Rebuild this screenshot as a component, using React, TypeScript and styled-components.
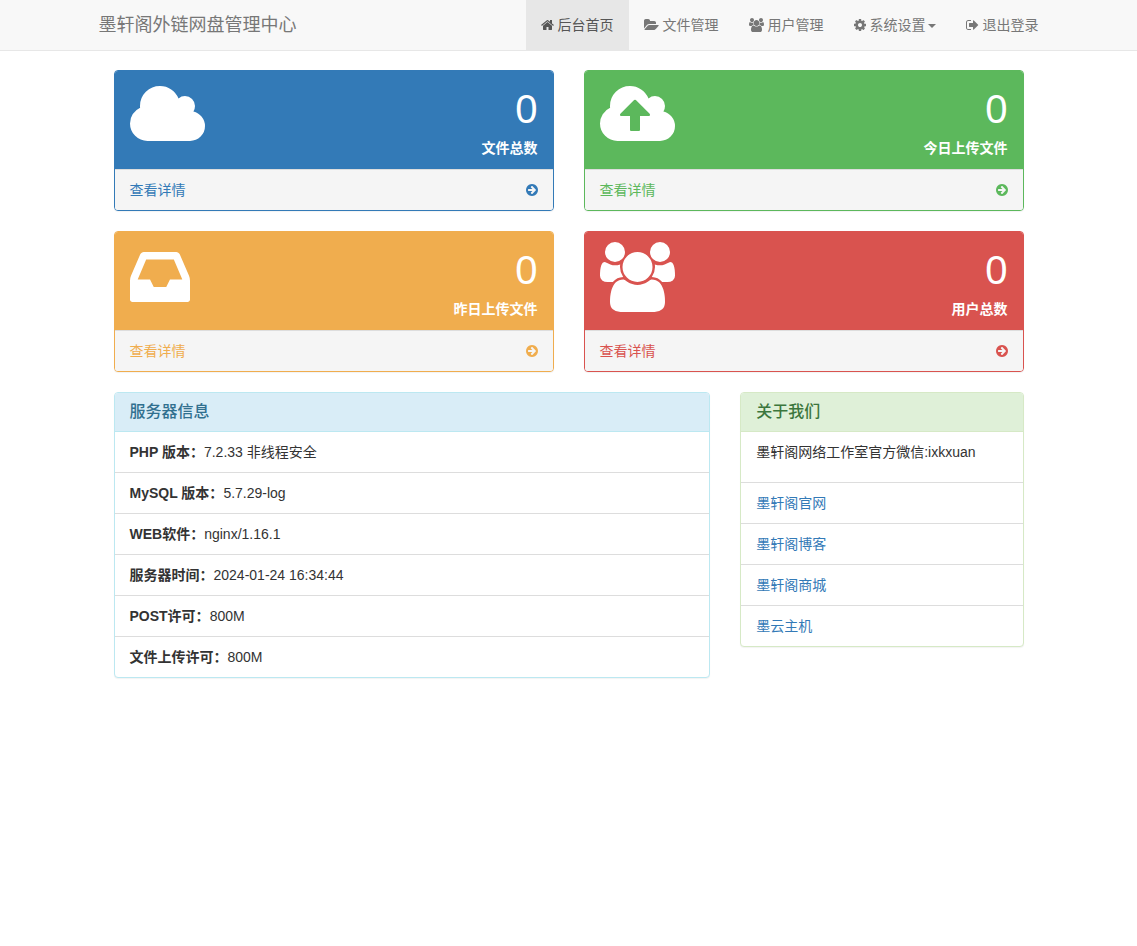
import React from 'react';
import styled, { createGlobalStyle, css } from 'styled-components';

const GlobalStyle = createGlobalStyle`
  *, *::before, *::after { box-sizing: border-box; }
  body {
    margin: 0;
    background: #fff;
    color: #333;
    font-family: "Liberation Sans", Arial, "Noto Sans CJK SC", sans-serif;
    font-size: 14px;
    line-height: 20px;
  }
  a { color: #337ab7; text-decoration: none; }
  ul, p, h3 { margin: 0; padding: 0; }
  ul { list-style: none; }
`;

/* Icons share a 1792-unit em square; x and width give each one's advance box. */
const glyphs = {
  home: {
    x: 64,
    width: 1664,
    d: 'M1472 992v480q0 26-19 45t-45 19h-384v-384h-256v384h-384q-26 0-45-19t-19-45v-480q0-1 .5-3t.5-3l575-474 575 474q1 2 1 6zm223-69l-62 74q-8 9-21 11h-3q-13 0-21-7l-692-577-692 577q-12 8-24 7-13-2-21-11l-62-74q-8-10-7-23.5t11-21.5l719-599q32-26 76-26t76 26l244 204v-195q0-14 9-23t23-9h192q14 0 23 9t9 23v408l219 182q10 8 11 21.5t-7 23.5z',
  },
  folder: {
    x: 0,
    width: 1920,
    d: 'M1879 952q0 31-31 66l-336 396q-43 51-120.5 86.5t-143.5 35.5h-1088q-34 0-60.5-13t-26.5-43q0-31 31-66l336-396q43-51 120.5-86.5t143.5-35.5h1088q34 0 60.5 13t26.5 43zm-343-344v160h-832q-94 0-197 47.5t-164 119.5l-337 396-5 6q0-4-.5-12.5t-.5-12.5v-960q0-92 66-158t158-66h320q92 0 158 66t66 158v32h544q92 0 158 66t66 158z',
  },
  users: {
    x: 0,
    width: 1920,
    d: 'M593 896q-162 5-265 128h-134q-82 0-138-40.5t-56-118.5q0-353 124-353 6 0 43.5 21t97.5 42.5 119 21.5q67 0 133-23-5 37-5 66 0 139 81 256zm1071 637q0 120-73 189.5t-194 69.5h-874q-121 0-194-69.5t-73-189.5q0-53 3.5-103.5t14-109 26.5-108.5 43-97.5 62-81 85.5-53.5 111.5-20q10 0 43 21.5t73 48 107 48 135 21.5 135-21.5 107-48 73-48 43-21.5q61 0 111.5 20t85.5 53.5 62 81 43 97.5 26.5 108.5 14 109 3.5 103.5zm-1024-1277q0 106-75 181t-181 75-181-75-75-181 75-181 181-75 181 75 75 181zm704 384q0 159-112.5 271.5t-271.5 112.5-271.5-112.5-112.5-271.5 112.5-271.5 271.5-112.5 271.5 112.5 112.5 271.5zm576 225q0 78-56 118.5t-138 40.5h-134q-103-123-265-128 81-117 81-256 0-29-5-66 66 23 133 23 59 0 119-21.5t97.5-42.5 43.5-21q124 0 124 353zm-128-609q0 106-75 181t-181 75-181-75-75-181 75-181 181-75 181 75 75 181z',
  },
  cog: {
    x: 128,
    width: 1536,
    d: 'M1152 896q0-106-75-181t-181-75-181 75-75 181 75 181 181 75 181-75 75-181zm512-109v222q0 12-8 23t-20 13l-185 28q-19 54-39 91 35 50 107 138 10 12 10 25t-9 23q-27 37-99 108t-94 71q-12 0-26-9l-138-108q-44 23-91 38-16 136-29 186-7 28-36 28h-222q-14 0-24.5-8.5t-11.5-21.5l-28-184q-49-16-90-37l-141 107q-10 9-25 9-14 0-25-11-126-114-165-168-7-10-7-23 0-12 8-23 15-21 51-66.5t54-70.5q-27-50-41-99l-183-27q-13-2-21-12.5t-8-23.5v-222q0-12 8-23t19-13l186-28q14-46 39-92-40-57-107-138-10-12-10-24 0-10 9-23 26-36 98.5-107.5t94.5-71.5q13 0 26 10l138 107q44-23 91-38 16-136 29-186 7-28 36-28h222q14 0 24.5 8.5t11.5 21.5l28 184q49 16 90 37l142-107q9-9 24-9 13 0 25 10 129 119 165 170 7 8 7 22 0 12-8 23-15 21-51 66.5t-54 70.5q26 50 41 98l183 28q13 2 21 12.5t8 23.5z',
  },
  signOut: {
    x: 64,
    width: 1664,
    d: 'M704 1440q0 4 1 20t.5 26.5-3 23.5-10 19.5-20.5 6.5h-320q-119 0-203.5-84.5t-84.5-203.5v-704q0-119 84.5-203.5t203.5-84.5h320q13 0 22.5 9.5t9.5 22.5q0 4 1 20t.5 26.5-3 23.5-10 19.5-20.5 6.5h-320q-66 0-113 47t-47 113v704q0 66 47 113t113 47h312l11.5 1 11.5 3 8 5.5 7 9 2 13.5zm928-544q0 26-19 45l-544 544q-19 19-45 19t-45-19-19-45v-288h-448q-26 0-45-19t-19-45v-384q0-26 19-45t45-19h448v-288q0-26 19-45t45-19 45 19l544 544q19 19 19 45z',
  },
  cloud: {
    x: 64,
    width: 1920,
    d: 'M1984 1152q0 159-112.5 271.5t-271.5 112.5h-1088q-185 0-316.5-131.5t-131.5-316.5q0-132 71-241.5t187-163.5q-2-28-2-43 0-212 150-362t362-150q158 0 286.5 88t187.5 230q70-62 166-62 106 0 181 75t75 181q0 75-41 138 129 30 213 134.5t84 239.5z',
  },
  cloudUp: {
    x: 64,
    width: 1920,
    d: 'M1344 864q0-14-9-23l-352-352q-9-9-23-9t-23 9l-351 351q-10 12-10 24 0 14 9 23t23 9h224v352q0 13 9.5 22.5t22.5 9.5h192q13 0 22.5-9.5t9.5-22.5v-352h224q13 0 22.5-9.5t9.5-22.5zm640 288q0 159-112.5 271.5t-271.5 112.5h-1088q-185 0-316.5-131.5t-131.5-316.5q0-130 70-240t188-165q-2-30-2-43 0-212 150-362t362-150q156 0 285.5 87t188.5 231q71-62 166-62 106 0 181 75t75 181q0 76-41 138 130 31 213.5 135.5t83.5 238.5z',
  },
  inbox: {
    x: 128,
    width: 1536,
    d: 'M1151 960h316q-1-3-2.5-8t-2.5-8l-212-496h-708l-212 496q-1 2-2.5 8t-2.5 8h316l95 192h320zm513 30v482q0 26-19 45t-45 19h-1408q-26 0-45-19t-19-45v-482q0-62 25-123l238-552q10-25 36.5-42t52.5-17h832q26 0 52.5 17t36.5 42l238 552q25 61 25 123z',
  },
  arrow: {
    x: 128,
    width: 1536,
    d: 'M1413 896q0-27-18-45l-91-91-362-362q-18-18-45-18t-45 18l-91 91q-18 18-18 45t18 45l189 189h-502q-26 0-45 19t-19 45v128q0 26 19 45t45 19h502l-189 189q-19 19-19 45t19 45l91 91q18 18 45 18t45-18l362-362 91-91q18-18 18-45zm251 0q0 209-103 385.5t-279.5 279.5-385.5 103-385.5-103-279.5-279.5-103-385.5 103-385.5 279.5-279.5 385.5-103 385.5 103 279.5 279.5 103 385.5z',
  },
};

type GlyphName = keyof typeof glyphs;

const Svg = styled.svg<{ $size: number }>`
  display: block;
  flex: none;
  height: ${(p) => p.$size}px;
  fill: currentColor;
`;

function Icon({ name, size = 14 }: { name: GlyphName; size?: number }) {
  const g = glyphs[name];
  return (
    <Svg
      $size={size}
      width={(g.width * size) / 1792}
      viewBox={`${g.x} 0 ${g.width} 1792`}
      aria-hidden="true"
    >
      <path d={g.d} />
    </Svg>
  );
}

const Navbar = styled.header`
  background: #f8f8f8;
  border-bottom: 1px solid #e7e7e7;
`;

const NavInner = styled.div`
  display: flex;
  justify-content: space-between;
  flex-wrap: wrap;
  max-width: 970px;
  margin: 0 auto;
`;

const Brand = styled.a`
  padding: 15px;
  color: #777;
  font-size: 18px;
`;

const NavList = styled.ul`
  display: flex;
  flex-wrap: wrap;
`;

const navItem = css<{ $active?: boolean }>`
  display: flex;
  align-items: center;
  gap: 4px;
  padding: 15px;
  border: 0;
  font: inherit;
  color: ${(p) => (p.$active ? '#555' : '#777')};
  background: ${(p) => (p.$active ? '#e7e7e7' : 'transparent')};
  cursor: pointer;
`;

const NavLink = styled.a<{ $active?: boolean }>`
  ${navItem}
`;

const NavToggle = styled.button<{ $active?: boolean }>`
  ${navItem}
`;

const Caret = styled.span`
  display: inline-block;
  margin-left: 2px;
  vertical-align: middle;
  border-top: 4px solid;
  border-left: 4px solid transparent;
  border-right: 4px solid transparent;
`;

const Main = styled.main`
  display: grid;
  grid-template-columns: repeat(12, 1fr);
  gap: 20px 30px;
  align-items: start;
  max-width: 970px;
  margin: 0 auto;
  padding: 19px 30px 20px;
`;

const Panel = styled.section<{ $span: number; $border: string }>`
  grid-column: span ${(p) => p.$span};
  border: 1px solid ${(p) => p.$border};
  border-radius: 4px;
  background: #fff;
  box-shadow: 0 1px 1px rgba(0, 0, 0, 0.05);
`;

const StatHeading = styled.div<{ $color: string }>`
  display: flex;
  justify-content: space-between;
  align-items: flex-start;
  padding: 10px 15px;
  color: #fff;
  background: ${(p) => p.$color};
  border-bottom: 1px solid ${(p) => p.$color};
  border-radius: 3px 3px 0 0;
`;

const StatText = styled.div`
  text-align: right;
`;

const StatValue = styled.div`
  font-size: 40px;
  line-height: 57px;
`;

const StatLabel = styled.div`
  font-weight: bold;
`;

const StatFooter = styled.a<{ $color: string }>`
  display: flex;
  justify-content: space-between;
  align-items: center;
  padding: 10px 15px;
  color: ${(p) => p.$color};
  background: #f5f5f5;
  border-top: 1px solid #ddd;
  border-radius: 0 0 3px 3px;
`;

const PanelHeading = styled.div<{ $bg: string; $border: string; $color: string }>`
  padding: 10px 15px;
  color: ${(p) => p.$color};
  background: ${(p) => p.$bg};
  border-bottom: 1px solid ${(p) => p.$border};
  border-radius: 3px 3px 0 0;
`;

const PanelTitle = styled.h3`
  font-size: 16px;
  font-weight: 500;
  line-height: 18px;
`;

const PanelBody = styled.p`
  && {
    padding: 10px 15px 20px;
    border-bottom: 1px solid #ddd;
  }
`;

const Row = styled.li`
  padding: 10px 15px;

  & + & {
    border-top: 1px solid #ddd;
  }
`;

const stats: { icon: GlyphName; label: string; value: number; color: string }[] = [
  { icon: 'cloud', label: '文件总数', value: 0, color: '#337ab7' },
  { icon: 'cloudUp', label: '今日上传文件', value: 0, color: '#5cb85c' },
  { icon: 'inbox', label: '昨日上传文件', value: 0, color: '#f0ad4e' },
  { icon: 'users', label: '用户总数', value: 0, color: '#d9534f' },
];

const serverInfo = [
  ['PHP 版本:', '7.2.33 非线程安全'],
  ['MySQL 版本:', '5.7.29-log'],
  ['WEB软件:', 'nginx/1.16.1'],
  ['服务器时间:', '2024-01-24 16:34:44'],
  ['POST许可:', '800M'],
  ['文件上传许可:', '800M'],
].map(([label, value]) => [label.replace(':', '：'), value]);

const links = ['墨轩阁官网', '墨轩阁博客', '墨轩阁商城', '墨云主机'];

export default function App() {
  return (
    <div lang="zh-CN">
      <GlobalStyle />
      <Navbar>
        <NavInner>
          <Brand href="#">墨轩阁外链网盘管理中心</Brand>
          <nav>
            <NavList>
              <li><NavLink href="#" $active><Icon name="home" />后台首页</NavLink></li>
              <li><NavLink href="#"><Icon name="folder" />文件管理</NavLink></li>
              <li><NavLink href="#"><Icon name="users" />用户管理</NavLink></li>
              <li>
                <NavToggle type="button" aria-haspopup="true">
                  <Icon name="cog" />
                  <span>系统设置<Caret /></span>
                </NavToggle>
              </li>
              <li><NavLink href="#"><Icon name="signOut" />退出登录</NavLink></li>
            </NavList>
          </nav>
        </NavInner>
      </Navbar>
      <Main>
        {stats.map((s) => (
          <Panel key={s.label} $span={6} $border={s.color}>
            <StatHeading $color={s.color}>
              <Icon name={s.icon} size={70} />
              <StatText>
                <StatValue>{s.value}</StatValue>
                <StatLabel>{s.label}</StatLabel>
              </StatText>
            </StatHeading>
            <StatFooter href="#" $color={s.color}>
              查看详情
              <Icon name="arrow" />
            </StatFooter>
          </Panel>
        ))}
        <Panel $span={8} $border="#bce8f1">
          <PanelHeading $bg="#d9edf7" $border="#bce8f1" $color="#31708f">
            <PanelTitle>服务器信息</PanelTitle>
          </PanelHeading>
          <ul>
            {serverInfo.map(([label, value]) => (
              <Row key={label}><b>{label}</b>{value}</Row>
            ))}
          </ul>
        </Panel>
        <Panel $span={4} $border="#d6e9c6">
          <PanelHeading $bg="#dff0d8" $border="#d6e9c6" $color="#3c763d">
            <PanelTitle>关于我们</PanelTitle>
          </PanelHeading>
          <PanelBody>墨轩阁网络工作室官方微信:ixkxuan</PanelBody>
          <ul>
            {links.map((text) => (
              <Row key={text}><a href="#">{text}</a></Row>
            ))}
          </ul>
        </Panel>
      </Main>
    </div>
  );
}
